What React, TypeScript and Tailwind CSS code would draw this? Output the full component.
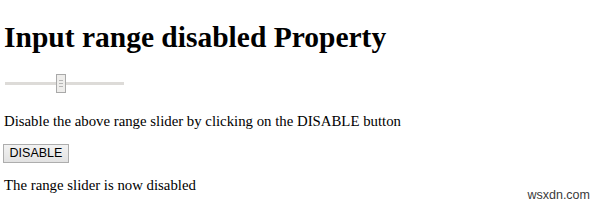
export default function App() {
  return (
    <div className="relative h-[205px] w-[600px] overflow-hidden bg-white pl-[4px] font-['Liberation_Serif',serif] text-black">
      <h1 className="mt-[20px] text-[29.5px] font-bold leading-[34px]">
        Input range disabled Property
      </h1>

      {/* disabled range slider, old IE look */}
      <div className="mt-[20px] flex h-[19px] w-[120px] items-center pl-px">
        <span className="h-[3px] w-[51px] bg-[#dddbd8]" />
        <span className="flex h-[19px] w-[10px] flex-col items-center justify-center gap-[2px] border border-[#a9a9a9] bg-[#eeedeb]">
          <span className="h-px w-[4px] bg-[#b5b5b5]" />
          <span className="h-px w-[4px] bg-[#b5b5b5]" />
          <span className="h-px w-[4px] bg-[#b5b5b5]" />
        </span>
        <span className="h-[3px] flex-1 bg-[#dddbd8]" />
      </div>

      <p className="mt-[19px] text-[14.8px] leading-[18px]">
        Disable the above range slider by clicking on the DISABLE button
      </p>

      <button className="mt-[14px] -ml-px flex h-[19px] w-[66px] items-center justify-center border border-[#adadad] bg-gradient-to-b from-[#f2f2f2] to-[#e2e2e2] font-['Liberation_Sans',sans-serif] text-[12.5px] leading-none text-black">
        DISABLE
      </button>

      <p className="mt-[13px] text-[14.8px] leading-[18px]">
        The range slider is now disabled
      </p>

      <span className="absolute bottom-[4px] right-[10px] font-['Liberation_Sans',sans-serif] text-[12.5px] leading-none text-[#3a3a3a]">
        wsxdn.com
      </span>
    </div>
  );
}
